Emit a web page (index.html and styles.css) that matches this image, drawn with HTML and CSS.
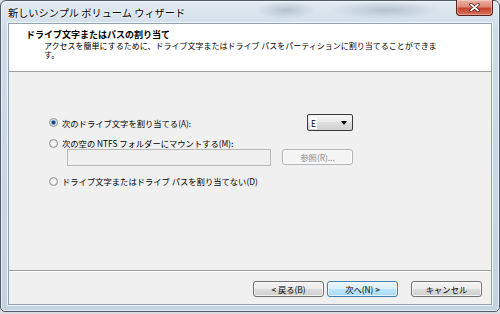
FILE: index.html
```html
<!DOCTYPE html>
<html lang="ja">
<head>
    <meta charset="UTF-8">
    <title>新しいシンプル ボリューム ウィザード</title>
    <link rel="stylesheet" href="styles.css">
</head>
<body>
    <div class="window">
        <div class="titlebar">
            <span class="title">新しいシンプル ボリューム ウィザード</span>
            <button class="close" type="button" aria-label="閉じる">
                <svg width="11" height="9" viewBox="0 0 11 9">
                    <path d="M2 1.5 L9 7.5 M9 1.5 L2 7.5" stroke="#4a1510" stroke-width="3.4" stroke-linecap="round"/>
                    <path d="M2 1.5 L9 7.5 M9 1.5 L2 7.5" stroke="#fff" stroke-width="1.8" stroke-linecap="round"/>
                </svg>
            </button>
        </div>

        <div class="client">
            <div class="header">
                <div class="heading">ドライブ文字またはパスの割り当て</div>
                <div class="subtitle">アクセスを簡単にするために、ドライブ文字またはドライブ パスをパーティションに割り当てることができま<br>す。</div>
            </div>

            <div class="content">
                <div class="options">
                    <div class="option">
                        <label class="choice"><span class="radio checked"></span>次のドライブ文字を割り当てる(A):</label>
                        <div class="combo"><span class="combo-value">E</span><span class="arrow"></span></div>
                    </div>
                    <div class="option plain">
                        <label class="choice"><span class="radio"></span>次の空の NTFS フォルダーにマウントする(M):</label>
                    </div>
                    <div class="mount">
                        <input class="path" type="text" disabled>
                        <button class="btn" type="button" disabled>参照(R)...</button>
                    </div>
                    <div class="option plain last">
                        <label class="choice"><span class="radio"></span>ドライブ文字またはドライブ パスを割り当てない(D)</label>
                    </div>
                </div>
            </div>

            <div class="footer">
                <button class="btn" type="button">&lt; 戻る(B)</button>
                <button class="btn default" type="button">次へ(N) &gt;</button>
                <button class="btn cancel" type="button">キャンセル</button>
            </div>
        </div>
    </div>
</body>
</html>
```

FILE: styles.css
```css
* { box-sizing: border-box; }
body {
    margin: 0;
    background: #d9dde1;
    font-family: "Noto Sans CJK JP", "Noto Sans", sans-serif;
    font-size: 8.3px;
    color: #000;
}

/* glass frame */
.window {
    width: 500px; height: 312px;
    display: flex; flex-direction: column;
    padding: 0 7px 6px;
    border: 1px solid #4f5d6b;
    border-radius: 6px 6px 5px 5px;
    background:
        radial-gradient(ellipse 30px 9px at 285px 9px, rgba(110,130,150,.35), transparent),
        radial-gradient(ellipse 55px 9px at 385px 9px, rgba(110,130,150,.35), transparent),
        linear-gradient(#e2eaf2, #cfdce8 28px, #c3d3e2);
    box-shadow: inset 0 0 0 1px rgba(255,255,255,.55);
}
.titlebar {
    height: 22px;
    margin: 0 -7px;
    padding: 0 6px 0 7px;
    display: flex; justify-content: space-between; align-items: flex-start;
}
.title {
    font-size: 10.2px; line-height: 12px;
    margin-top: 6px;
    text-shadow: 0 0 3px #fff, 0 0 2px #fff;
}
.close {
    width: 37px; height: 16px;
    margin-top: -1px; padding: 0;
    display: flex; align-items: center; justify-content: center;
    border: 1px solid #5b1e1a; border-top: none;
    border-radius: 0 0 4px 4px;
    background: linear-gradient(#eab0a3, #dc8a78 45%, #c6442f 55%, #d6705b);
    box-shadow: inset 0 0 0 1px rgba(255,255,255,.35);
}

/* dialog body */
.client {
    flex: 1;
    display: flex; flex-direction: column;
    background: #f0f0f0;
    border: 1px solid #8fa1b4;
    box-shadow: 0 0 0 1px rgba(255,255,255,.75);
}
.header {
    height: 48px;
    padding: 6px 0 0 17px;
    background: #fff;
    border-bottom: 1px solid #a0a0a0;
}
.heading { font-weight: bold; font-size: 9px; line-height: 10px; }
.subtitle { margin: 1px 0 0 18px; font-size: 8px; line-height: 9px; white-space: nowrap; }

.content { flex: 1; padding: 42px 0 0 40px; }
.options { width: 304px; }
.option { display: flex; align-items: center; justify-content: space-between; height: 17px; }
.option.plain { height: 10px; margin-top: 7px; }
.option.last { margin-top: 10px; }
.choice { display: flex; align-items: center; line-height: 10px; white-space: nowrap; }

.radio {
    flex: none;
    width: 9px; height: 9px;
    margin-right: 4px;
    border: 1px solid #8e8f8f;
    border-radius: 50%;
    background: radial-gradient(circle, #fff 0, #f2f2f2 40%, #d2d2d2 100%);
}
.radio.checked {
    background: radial-gradient(circle, #16375f 0, #1f5490 1.6px, #9cc8ea 2.4px, #e9f3fb 3.2px, #fff 4px);
}

.combo {
    width: 46px; height: 17px;
    display: flex; align-items: center; justify-content: space-between;
    padding: 0 5px 0 2px;
    border: 1px solid #3a3a3a;
    border-radius: 2px;
    background: linear-gradient(#f6f6f6, #ececec 50%, #dedede 50%, #d0d0d0);
}
.combo-value { line-height: 12px; background: #fff; padding: 0 1px; }
.arrow {
    width: 0; height: 0;
    border-left: 3.5px solid transparent;
    border-right: 3.5px solid transparent;
    border-top: 4px solid #000;
}

.mount { display: flex; justify-content: space-between; margin: 1px 0 0 18px; }
.path {
    width: 204px; height: 17px;
    margin: 0; padding: 0;
    border: 1px solid #b5b9bc;
    background: #f0f0f0;
}

.btn {
    width: 71px; height: 16px;
    margin: 0; padding: 0;
    font: inherit; line-height: 14px; color: #000;
    border: 1px solid #707070;
    border-radius: 3px;
    background: linear-gradient(#f3f3f3, #ebebeb 50%, #dddddd 50%, #cfcfcf);
    box-shadow: inset 0 0 0 1px rgba(255,255,255,.7);
}
.btn:disabled {
    color: #8d8d8d;
    border-color: #b0b4b7;
    background: #f4f4f4;
}
.btn.default {
    border-color: #3c7fb1;
    background: linear-gradient(#eaf6fd, #d9f0fc 50%, #bee6fd 50%, #a7d9f5);
}
.btn.cancel { margin-left: 10px; }

.footer {
    height: 34px;
    display: flex; justify-content: flex-end; align-items: flex-start; gap: 3px;
    padding: 10px 9px 0 0;
    border-top: 1px solid #a0a0a0;
    box-shadow: inset 0 1px #fff;
}
```
